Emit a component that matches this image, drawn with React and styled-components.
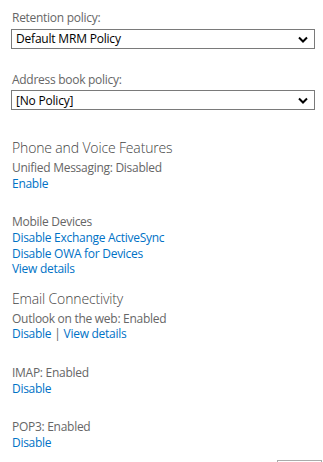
import React from "react";
import styled, { createGlobalStyle } from "styled-components";

const GlobalStyle = createGlobalStyle`
  body {
    margin: 0;
    background: #ffffff;
    font-family: "Open Sans", "Noto Sans", sans-serif;
  }
`;

const Page = styled.div`
  width: 323px;
  height: 462px;
  overflow: hidden;
  padding: 10px 0 0 11px;
  box-sizing: border-box;
  font-size: 12px;
  line-height: 15.6px;
  letter-spacing: -0.28px;
  color: #666666;
`;

const Field = styled.div`
  width: 304px;
  margin-bottom: ${(p) => p.$gap || 0}px;
`;

const Label = styled.div`
  padding-left: 1px;
  margin-bottom: 3px;
`;

const SelectWrap = styled.div`
  position: relative;
  height: 20px;
`;

const Select = styled.select`
  appearance: none;
  width: 100%;
  height: 20px;
  margin: 0;
  padding: 0 24px 0 4px;
  border: 1px solid #7a7a7a;
  border-radius: 0;
  background: #ffffff;
  color: #000000;
  font-family: inherit;
  font-size: 12px;
  letter-spacing: -0.2px;
  box-sizing: border-box;
`;

const Chevron = styled.svg`
  position: absolute;
  right: 7px;
  top: 7px;
  pointer-events: none;
`;

const Heading = styled.div`
  font-size: 14px;
  line-height: 20px;
  font-weight: 300;
  letter-spacing: -0.15px;
  color: #444444;
  margin-top: ${(p) => p.$top || 0}px;
  padding-left: 1px;
`;

const Group = styled.div`
  margin-top: ${(p) => p.$top || 0}px;
  padding-left: 1px;
`;

const Line = styled.div``;

const Link = styled.a`
  color: #0072c6;
  text-decoration: none;
  cursor: pointer;
`;

const Sep = styled.span`
  color: #666666;
  margin: 0 3px;
`;

const Footer = styled.div`
  display: flex;
  justify-content: flex-end;
  margin-top: 10px;
  padding-right: 1px;
`;

const Button = styled.button`
  width: 45px;
  height: 28px;
  padding: 12px 0 0;
  border: 1px solid #ababab;
  background: #ffffff;
  font-family: inherit;
  font-size: 12px;
`;

const Dropdown = ({ label, value, gap }) => (
  <Field $gap={gap}>
    <Label>{label}</Label>
    <SelectWrap>
      <Select defaultValue={value}>
        <option>{value}</option>
      </Select>
      <Chevron width="10" height="7" viewBox="0 0 10 7">
        <path d="M1 1.5 L5 5.5 L9 1.5" fill="none" stroke="#000" strokeWidth="2" />
      </Chevron>
    </SelectWrap>
  </Field>
);

export default function App() {
  return (
    <>
      <GlobalStyle />
      <Page>
        <Dropdown label="Retention policy:" value="Default MRM Policy" gap={23} />
        <Dropdown label="Address book policy:" value="[No Policy]" />

        <Heading $top={28}>Phone and Voice Features</Heading>
        <Group $top={2}>
          <Line>Unified Messaging: Disabled</Line>
          <Line><Link>Enable</Link></Line>
        </Group>

        <Group $top={23}>
          <Line>Mobile Devices</Line>
          <Line><Link>Disable Exchange ActiveSync</Link></Line>
          <Line><Link>Disable OWA for Devices</Link></Line>
          <Line><Link>View details</Link></Line>
        </Group>

        <Heading $top={12}>Email Connectivity</Heading>
        <Group $top={2}>
          <Line>Outlook on the web: Enabled</Line>
          <Line>
            <Link>Disable</Link>
            <Sep>|</Sep>
            <Link>View details</Link>
          </Line>
        </Group>

        <Group $top={23}>
          <Line>IMAP: Enabled</Line>
          <Line><Link>Disable</Link></Line>
        </Group>

        <Group $top={23}>
          <Line>POP3: Enabled</Line>
          <Line><Link>Disable</Link></Line>
        </Group>

        <Footer>
          <Button>Save</Button>
        </Footer>
      </Page>
    </>
  );
}
